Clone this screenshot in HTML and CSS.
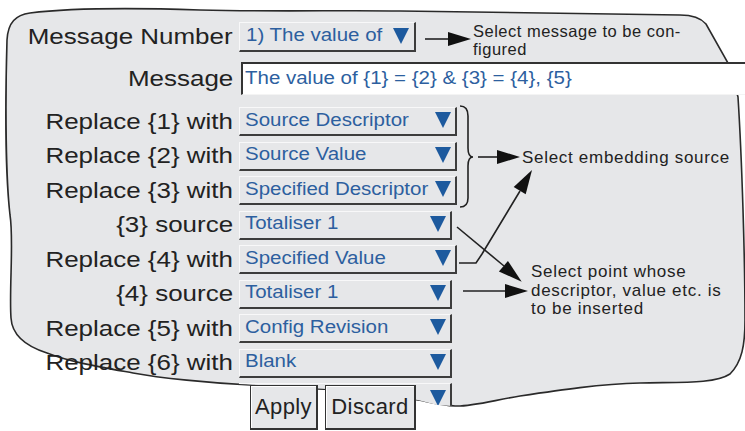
FILE: index.html
```html
<!DOCTYPE html>
<html lang="en">
<head>
  <meta charset="UTF-8" />
  <title>Message configuration</title>
  <link rel="stylesheet" href="styles.css">
</head>
<body>

  <div class="screen">
    <!-- torn page outline, brace and call-out arrows -->
    <svg class="outline" width="745" height="431" viewBox="0 0 745 431">
      <path class="page" d="M7,40 C8,22 16,15 30,13 C70,8 140,8 200,10 C280,12 340,10 400,11 C500,12 600,14 680,15 C692,15 700,17 706,24 L728,63 L738,97 C742,160 745,260 745,320 C745,345 742,362 730,374 C715,384 680,382 640,383 C600,384 560,390 520,396 C495,400 470,407 455,406 C440,405 430,402 418,400 C380,395 345,389 318,389 C290,388 270,386 250,385 C210,383 160,378 133,373 C100,367 70,362 47,353 C25,346 12,335 11,318 C9,290 14,240 10,215 C6,180 5,110 7,40 Z"/>
      <path class="line" d="M460,106 C466,106 468,110 468,116 L468,148 C468,154 470,157 473,157 C470,157 468,160 468,166 L468,198 C468,204 466,207 460,207"/>
      <path class="line" d="M425,39 L452,39"/>
      <polygon class="head" points="448,32 471,39 448,46"/>
      <path class="line" d="M478,157 L500,157"/>
      <polygon class="head" points="497,150 520,157 497,164"/>
      <path class="line" d="M459,263 L476,263 L482,254 L520,191"/>
      <polygon class="head" points="525.7,194.2 532,170 513.7,187"/>
      <path class="line" d="M457,227 L504,266"/>
      <polygon class="head" points="498.9,271.5 521.7,281.7 507.9,260.9"/>
      <path class="line" d="M463,291 L508,291"/>
      <polygon class="head" points="505,284 528,291 505,298"/>
    </svg>

    <div class="form">
      <div class="row row-first">
        <div class="label"><span>Message Number</span></div>
        <div class="field field-number"><span class="val">1) The value of</span><span class="drop"></span></div>
      </div>
      <div class="row row-message">
        <div class="label"><span>Message</span></div>
        <div class="text-input"><span class="val">The value of {1} = {2} &amp; {3} = {4}, {5}</span></div>
      </div>
      <div class="row row-list">
        <div class="label"><span>Replace {1} with</span></div>
        <div class="field field-wide"><span class="val">Source Descriptor</span><span class="drop"></span></div>
      </div>
      <div class="row">
        <div class="label"><span>Replace {2} with</span></div>
        <div class="field field-wide"><span class="val">Source Value</span><span class="drop"></span></div>
      </div>
      <div class="row">
        <div class="label"><span>Replace {3} with</span></div>
        <div class="field field-wide"><span class="val">Specified Descriptor</span><span class="drop"></span></div>
      </div>
      <div class="row">
        <div class="label"><span>{3} source</span></div>
        <div class="field"><span class="val">Totaliser 1</span><span class="drop"></span></div>
      </div>
      <div class="row">
        <div class="label"><span>Replace {4} with</span></div>
        <div class="field field-wide"><span class="val">Specified Value</span><span class="drop"></span></div>
      </div>
      <div class="row">
        <div class="label"><span>{4} source</span></div>
        <div class="field"><span class="val">Totaliser 1</span><span class="drop"></span></div>
      </div>
      <div class="row">
        <div class="label"><span>Replace {5} with</span></div>
        <div class="field"><span class="val">Config Revision</span><span class="drop"></span></div>
      </div>
      <div class="row">
        <div class="label"><span>Replace {6} with</span></div>
        <div class="field"><span class="val">Blank</span><span class="drop"></span></div>
      </div>
      <div class="row row-cut">
        <div class="label"></div>
        <div class="field field-cut"><span class="drop"></span></div>
      </div>
    </div>

    <div class="note note-message">Select message to be con-<br>figured</div>
    <div class="note note-source">Select embedding source</div>
    <div class="note note-point">Select point whose<br>descriptor, value etc. is<br>to be inserted</div>

    <div class="buttons">
      <button class="btn btn-apply">Apply</button>
      <button class="btn btn-discard">Discard</button>
    </div>
  </div>

</body>
</html>
```

FILE: styles.css
```css
body {
  margin: 0;
  background-color: white;
  font-family: 'Liberation Sans', Arial, sans-serif;
  color: #222;
}

.screen {
  position: relative;
  width: 745px;
  height: 431px;
  overflow: hidden;
}

/* Outline drawing */
.outline {
  position: absolute;
  left: 0;
  top: 0;
}
.outline .page {
  fill: #e6e7e9;
  stroke: #2a2a2a;
  stroke-width: 1.6;
}
.outline .line {
  fill: none;
  stroke: #222;
  stroke-width: 1.6;
}
.outline .head {
  fill: #111;
}

/* Form rows */
.form {
  position: relative;
  padding-top: 22px;
}
.row {
  display: flex;
  align-items: center;
  height: 29px;
  margin-top: 5.5px;
}
.row-first {
  height: 30px;
  margin-top: 0;
}
.row-message {
  height: 33px;
  margin-top: 10px;
}
.row-list {
  margin-top: 12px;
}
.row-cut {
  height: 23px;
  align-items: flex-start;
}

.label {
  width: 233px;
  flex: none;
  text-align: right;
  font-size: 22px;
  white-space: nowrap;
}
.label span {
  display: inline-block;
  transform: scaleX(1.18);
  transform-origin: right center;
}

.field {
  display: flex;
  align-items: center;
  box-sizing: border-box;
  width: 213px;
  height: 100%;
  margin-left: 6px;
  padding: 0 4px 2px 5px;
  background-color: #e6e7e9;
  border-top: 1px solid #f8f8f9;
  border-left: 1px solid #f8f8f9;
  border-right: 2px solid #3d3d3d;
  border-bottom: 2px solid #3d3d3d;
}
.field-number {
  width: 177px;
  padding-left: 6px;
  padding-right: 5px;
}
.field-wide {
  width: 218px;
}
.field-cut {
  border-bottom: none;
  padding-top: 6px;
  padding-bottom: 0;
  align-items: flex-start;
  clip-path: polygon(0 0, 100% 0, 100% 23px, 93% 22px, 84% 17px, 37% 5px, 0 1px);
}

.val {
  display: inline-block;
  margin-right: auto;
  font-size: 17.5px;
  color: #2d5f9f;
  white-space: nowrap;
  transform: scaleX(1.17);
  transform-origin: left center;
}

.drop {
  flex: none;
  margin-left: auto;
  width: 0;
  height: 0;
  border-left: 8px solid transparent;
  border-right: 8px solid transparent;
  border-top: 16px solid #1d5a9e;
}

.text-input {
  display: flex;
  align-items: center;
  box-sizing: border-box;
  width: 504px;
  height: 100%;
  margin-left: 8px;
  padding: 0 0 0 2px;
  background-color: white;
  border-top: 2px solid #333;
  border-left: 2px solid #333;
  border-bottom: 1px solid #f4f4f4;
}
.text-input .val {
  padding-bottom: 2px;
}

/* Call-out notes */
.note {
  position: absolute;
  font-size: 17px;
  line-height: 17px;
  letter-spacing: .7px;
  color: #222;
  white-space: nowrap;
}
.note-message {
  left: 473px;
  top: 22px;
  font-size: 16.5px;
  line-height: 18px;
  letter-spacing: .5px;
}
.note-source {
  left: 522px;
  top: 149px;
}
.note-point {
  left: 531px;
  top: 263px;
  line-height: 18.5px;
}

/* Buttons over the last row */
.buttons {
  position: absolute;
  left: 250px;
  top: 385px;
  display: flex;
  gap: 7px;
}
.btn {
  height: 45px;
  box-sizing: border-box;
  padding: 0;
  font-family: 'Liberation Sans', Arial, sans-serif;
  font-size: 22px;
  letter-spacing: .4px;
  color: #222;
  background-color: #e6e7e9;
  border: 1px solid #333;
  border-right-width: 2px;
  border-bottom-width: 2px;
  box-shadow: inset 1px 1px 0 #fff;
}
.btn-apply {
  width: 68px;
}
.btn-discard {
  width: 91px;
}
```
